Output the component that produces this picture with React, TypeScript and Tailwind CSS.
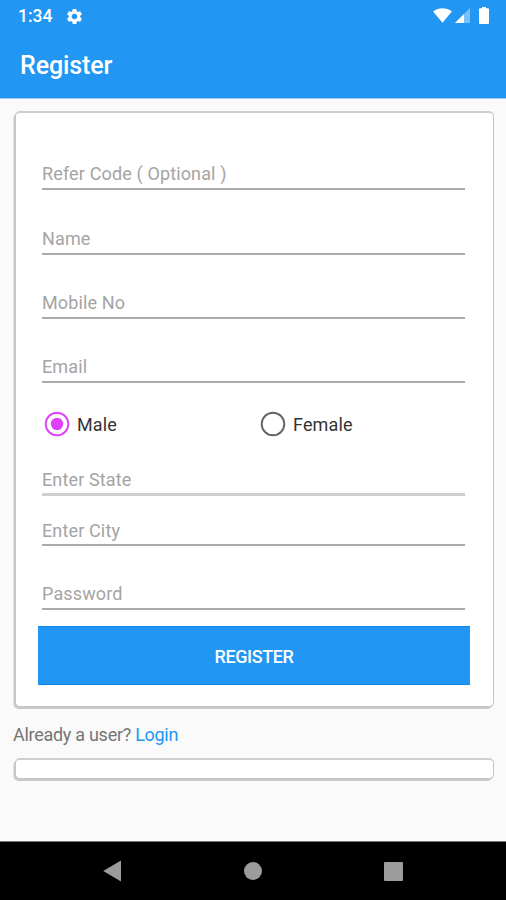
import React, { useState } from 'react';
import clsx from 'clsx';
import { MdSettings } from 'react-icons/md';

interface FieldProps {
  label: string;
  type?: string;
  className: string;
  soft?: boolean;
}

const Field: React.FC<FieldProps> = ({ label, type = 'text', className, soft }) => (
  <input
    type={type}
    placeholder={label}
    aria-label={label}
    className={clsx(
      'block w-full outline-none text-[18px] tracking-[0.14px] text-[#212121] placeholder:text-[#a4a4a4]',
      soft ? 'border-b-[3px] border-[#cecece]' : 'border-b-2 border-[#aaaaaa]',
      className
    )}
  />
);

interface RadioProps {
  label: string;
  checked: boolean;
  onSelect: () => void;
}

const Radio: React.FC<RadioProps> = ({ label, checked, onSelect }) => (
  <button
    type="button"
    role="radio"
    aria-checked={checked}
    onClick={onSelect}
    className="flex w-[216px] shrink-0 items-center gap-[7px] text-[18px] tracking-[0.15px] text-[#333333]"
  >
    <svg className="h-[26px] w-[26px]" viewBox="0 0 26 26" fill="none">
      <circle cx="13" cy="13" r="11.3" stroke={checked ? '#e040fb' : '#636363'} strokeWidth="1.9" />
      {checked && <circle cx="13" cy="13" r="6.2" fill="#e040fb" />}
    </svg>
    <span>{label}</span>
  </button>
);

const StatusBar = () => (
  <div className="flex h-8 items-center justify-between pl-[18px] pr-[17px] text-white">
    <div className="flex items-center gap-[13px]">
      <span className="pt-px text-[17.5px] font-medium">1:34</span>
      <MdSettings className="h-[19px] w-[19px]" />
    </div>
    <div className="flex items-center pb-[2px]">
      <svg className="h-[15px] w-[19px]" viewBox="0 0 20 16" fill="currentColor">
        <path d="M0 3.8C5.8-.9 14.2-.9 20 3.8L10 15.6z" />
      </svg>
      <svg className="ml-[3px] h-[15px] w-[15px]" viewBox="0 0 15 15" fill="currentColor">
        <path d="M0 15 15 0v15z" opacity=".4" />
        <path d="M0 15 9 6v9z" />
      </svg>
      <svg className="ml-[9px] h-[17px] w-[10px]" viewBox="0 0 10 17" fill="currentColor">
        <path d="M3 0h4v1.2h2a1 1 0 0 1 1 1V16a1 1 0 0 1-1 1H1a1 1 0 0 1-1-1V2.2a1 1 0 0 1 1-1h2z" />
      </svg>
    </div>
  </div>
);

const NavigationBar = () => (
  <nav className="flex h-[59px] items-center justify-between border-t border-[#777777] bg-black px-[103px] text-[#9c9c9c]">
    <svg className="h-[22px] w-[19px]" viewBox="0 0 19 22" fill="currentColor">
      <path d="M18 .6v20.8L.2 11z" />
    </svg>
    <span className="h-[18px] w-[18px] rounded-full bg-[#9c9c9c]" />
    <span className="h-[19px] w-[19px] rounded-[1px] bg-[#9c9c9c]" />
  </nav>
);

export default function App() {
  const [gender, setGender] = useState('Male');

  return (
    <div className="flex h-[900px] w-[506px] flex-col overflow-hidden bg-[#fafafa] font-['Roboto',sans-serif]">
      <header className="h-[99px] border-b border-[#a3cdf3] bg-[#2196f3]">
        <StatusBar />
        <h1 className="pl-[20px] pt-[16px] text-[25px] leading-[36px] font-medium tracking-[-0.1px] text-white">
          Register
        </h1>
      </header>

      <main className="flex-1 pl-[15px] pr-[12px] pt-[12px]">
        <form
          onSubmit={(e) => e.preventDefault()}
          className="h-[596px] rounded-[5px] border border-t-2 border-[#c4c4c4] border-t-[#cecece] bg-white px-[22px] shadow-[-1.5px_2px_0_#cacaca]"
        >
          <div className="pl-[4px] pr-[6px]">
            <Field label="Refer Code ( Optional )" className="mt-[45px] h-[32px]" />
            <Field label="Name" className="mt-[33px] h-[32px]" />
            <Field label="Mobile No" className="mt-[32px] h-[32px]" />
            <Field label="Email" className="mt-[32px] h-[32px]" />
          </div>
          <div role="radiogroup" className="mt-[28px] flex h-[26px] items-center pl-[6px]">
            <Radio label="Male" checked={gender === 'Male'} onSelect={() => setGender('Male')} />
            <Radio label="Female" checked={gender === 'Female'} onSelect={() => setGender('Female')} />
          </div>
          <div className="pl-[4px] pr-[6px]">
            <Field label="Enter State" className="mt-[27px] h-[32px] pt-[2px]" soft />
            <Field label="Enter City" className="mt-[18px] h-[32px] pt-[2px]" />
            <Field label="Password" type="password" className="mt-[32px] h-[32px]" />
          </div>
          <button
            type="submit"
            className="mt-[16px] h-[59px] w-[432px] border-y border-[#1187ea] bg-[#2196f3] pt-[2px] text-[18px] font-medium tracking-[-0.4px] text-white"
          >
            REGISTER
          </button>
        </form>

        <p className="-ml-[2px] mt-[15px] text-[18px] leading-[26px] tracking-[-0.28px] text-[#757575]">
          Already a user? <a className="text-[#2196f3]">Login</a>
        </p>

        <div className="mt-[10px] h-[21px] rounded-[5px] border border-t-2 border-[#c4c4c4] border-t-[#cecece] bg-white shadow-[-1.5px_2px_0_#cacaca]" />
      </main>

      <NavigationBar />
    </div>
  );
}
